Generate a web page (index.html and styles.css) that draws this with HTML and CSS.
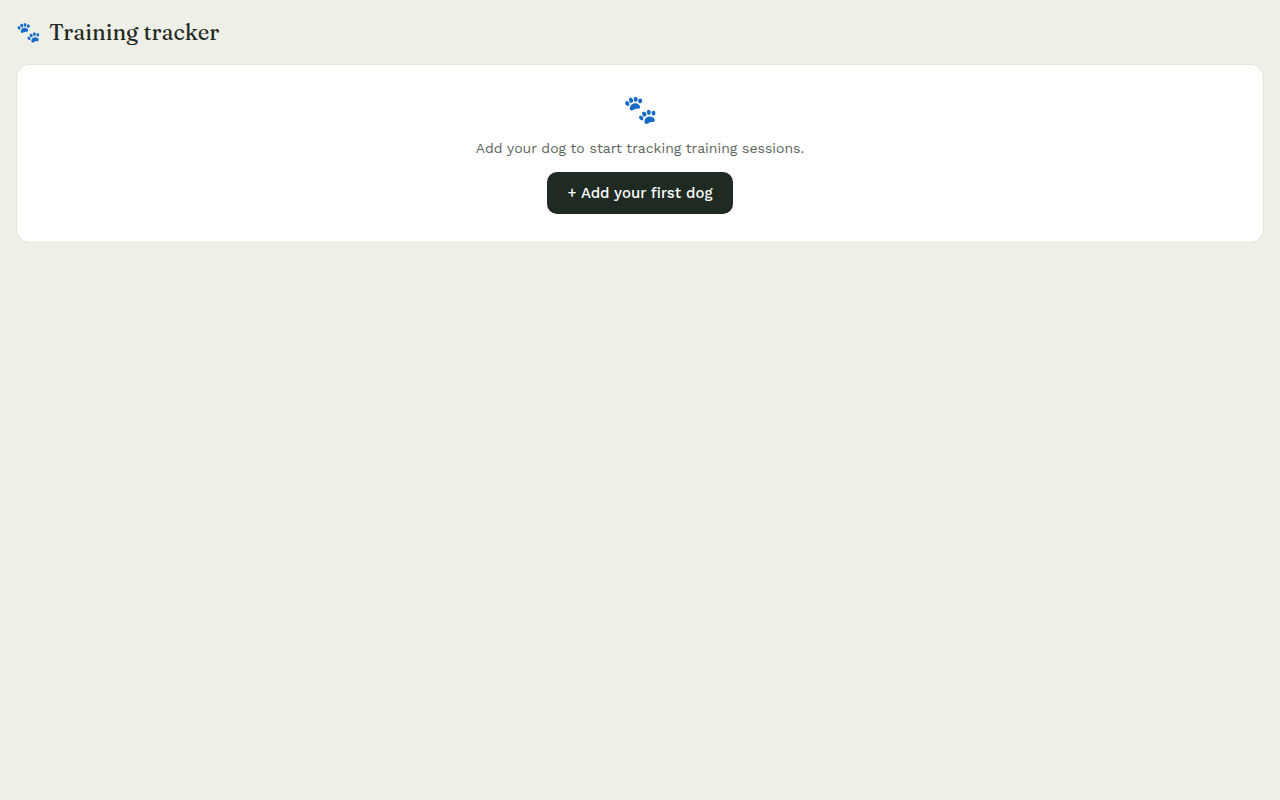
FILE: index.html
```html
<!doctype html>
<html lang="en">
<head>
	<meta charset="UTF-8">
	<meta name="viewport" content="width=device-width,initial-scale=1.0">
	<title>Training tracker</title>
	<link rel="stylesheet" href="styles.css">
</head>
<body>
	<header class="header">
		<span class="logo">🐾</span>
		<h1>Training tracker</h1>
	</header>
	<main class="empty">
		<div class="empty-icon">🐾</div>
		<p>Add your dog to start tracking training sessions.</p>
		<button type="button" class="btn">+ Add your first dog</button>
	</main>
</body>
</html>
```
FILE: styles.css
```css
* {
	box-sizing: border-box;
	margin: 0;
	padding: 0;
}
body {
	background: #eeefe7;
	color: #1e2a22;
	font-family: "Work Sans", Inter, sans-serif;
	padding: 16px;
}
.header {
	display: flex;
	align-items: center;
	gap: 8px;
	height: 32px;
	margin-bottom: 16px;
}
.logo {
	font-size: 20px;
}
h1 {
	font-family: Fraunces, "Liberation Serif", serif;
	font-size: 22px;
	font-weight: 500;
}
.empty {
	background: #fff;
	border: 1px solid #e2e5da;
	border-radius: 14px;
	padding: 28px 16px;
	text-align: center;
}
.empty-icon {
	font-size: 28px;
	line-height: 34px;
	margin-bottom: 10px;
}
.empty p {
	color: #5b655c;
	font-size: 14px;
	line-height: 22px;
	margin-bottom: 13px;
}
.btn {
	background: #1e2a22;
	border: 0;
	border-radius: 10px;
	color: #fff;
	font: 500 15px/18px "Work Sans", Inter, sans-serif;
	padding: 12px 20px;
	cursor: pointer;
}
```
